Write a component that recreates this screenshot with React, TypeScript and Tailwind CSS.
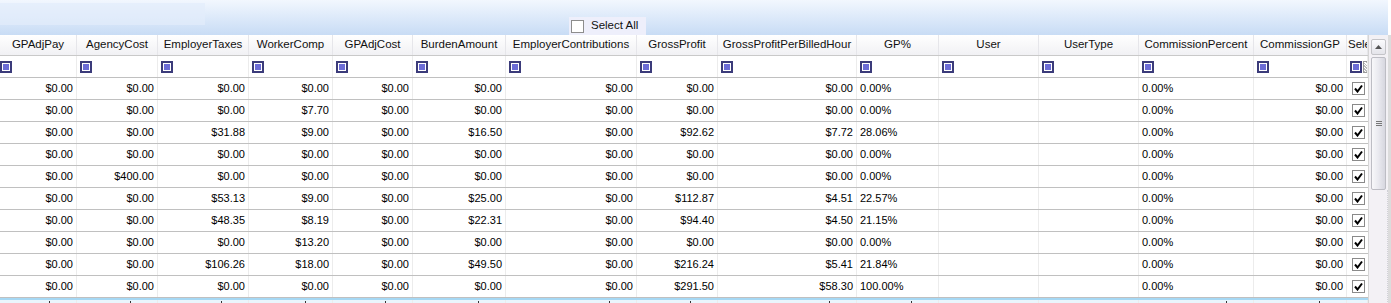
import React from "react";

const cols = [
  { name: "GPAdjPay", w: 77 },
  { name: "AgencyCost", w: 81 },
  { name: "EmployerTaxes", w: 91 },
  { name: "WorkerComp", w: 84 },
  { name: "GPAdjCost", w: 80 },
  { name: "BurdenAmount", w: 93 },
  { name: "EmployerContributions", w: 131 },
  { name: "GrossProfit", w: 81 },
  { name: "GrossProfitPerBilledHour", w: 139 },
  { name: "GP%", w: 82 },
  { name: "User", w: 100 },
  { name: "UserType", w: 100 },
  { name: "CommissionPercent", w: 115 },
  { name: "CommissionGP", w: 93 },
  { name: "Sele", w: 21 },
];

const gridCols =
  "grid grid-cols-[77px_81px_91px_84px_80px_93px_131px_81px_139px_82px_100px_100px_115px_93px_21px]";

// money columns then GP%
const rows: string[][] = [
  ["0.00", "0.00", "0.00", "0.00", "0.00", "0.00", "0.00", "0.00", "0.00", "0.00"],
  ["0.00", "0.00", "0.00", "7.70", "0.00", "0.00", "0.00", "0.00", "0.00", "0.00"],
  ["0.00", "0.00", "31.88", "9.00", "0.00", "16.50", "0.00", "92.62", "7.72", "28.06"],
  ["0.00", "0.00", "0.00", "0.00", "0.00", "0.00", "0.00", "0.00", "0.00", "0.00"],
  ["0.00", "400.00", "0.00", "0.00", "0.00", "0.00", "0.00", "0.00", "0.00", "0.00"],
  ["0.00", "0.00", "53.13", "9.00", "0.00", "25.00", "0.00", "112.87", "4.51", "22.57"],
  ["0.00", "0.00", "48.35", "8.19", "0.00", "22.31", "0.00", "94.40", "4.50", "21.15"],
  ["0.00", "0.00", "0.00", "13.20", "0.00", "0.00", "0.00", "0.00", "0.00", "0.00"],
  ["0.00", "0.00", "106.26", "18.00", "0.00", "49.50", "0.00", "216.24", "5.41", "21.84"],
  ["0.00", "0.00", "0.00", "0.00", "0.00", "0.00", "0.00", "291.50", "58.30", "100.00"],
];

function FilterIcon() {
  return (
    <div className="h-[12px] w-[12px] border-2 border-[#3b3b7a] bg-white p-px">
      <div className="h-full w-full bg-[#6c6cd6]" />
    </div>
  );
}

function CheckBox({ checked }: { checked: boolean }) {
  return (
    <div className="flex h-[13px] w-[13px] items-center justify-center border border-[#8a8a8a] bg-white">
      {checked ? (
        <svg width="9" height="9" viewBox="0 0 9 9">
          <path d="M1 4.5 L3.5 7.5 L8 1.5" stroke="#000" strokeWidth="2" fill="none" />
        </svg>
      ) : null}
    </div>
  );
}

function Scrollbar() {
  return (
    <div className="flex w-[20px] flex-col border-l border-[#d6d6d6] bg-[#f3f1f5] pt-[4px]">
      <div className="mx-auto flex h-[16px] w-[15px] items-center justify-center rounded-[2px] border border-[#c4c4c8] bg-gradient-to-b from-[#fbfbfd] to-[#e4e4ea]">
        <svg width="7" height="4" viewBox="0 0 7 4">
          <path d="M0 4 L3.5 0 L7 4 Z" fill="#555" />
        </svg>
      </div>
      <div className="mx-auto mt-[2px] flex h-[133px] w-[15px] items-center justify-center rounded-[2px] border border-[#bdbdc4] bg-gradient-to-r from-[#f8f8fa] via-[#e9e9ef] to-[#d7d7df]">
        <div className="flex flex-col gap-px">
          <div className="h-px w-[6px] bg-[#777]" />
          <div className="h-px w-[6px] bg-[#777]" />
          <div className="h-px w-[6px] bg-[#777]" />
        </div>
      </div>
      <div className="flex-1 border-r border-dotted border-[#d0d0d6]" />
    </div>
  );
}

export default function App() {
  return (
    <div
      className="relative h-[303px] w-[1391px] overflow-hidden bg-white text-[11px] text-black"
      style={{ fontFamily: '"Liberation Sans", Arial, sans-serif' }}
    >
      {/* top band */}
      <div className="flex h-[35px] w-[1388px] bg-gradient-to-b from-[#f2f7fe] to-[#c8dcf5]">
        <div className="mt-[3px] h-[22px] w-[205px] bg-[#e2edfb]/70" />
        <div className="ml-[364px] mt-[17px] flex h-[18px] w-[77px] items-center gap-[7px] bg-[#eeeffb] pl-[2px]">
          <div className="h-[13px] w-[13px] border border-[#8d8d8d] bg-white" />
          <span className="text-[11.5px] text-[#111]">Select All</span>
        </div>
      </div>

      <div className="flex">
        <div className="w-[1368px]">
          {/* header */}
          <div className={`${gridCols} h-[21px] border-b border-[#c9c9c9] bg-gradient-to-b from-white to-[#f1f1f4]`}>
            {cols.map((c, i) => (
              <div
                key={c.name}
                className={`flex items-center overflow-hidden whitespace-nowrap border-r border-[#e6e6ea] text-[11.5px] text-[#111] ${
                  i === 14 ? "justify-start pl-px" : "justify-center"
                }`}
              >
                {c.name}
              </div>
            ))}
          </div>
          {/* filter row */}
          <div className={`${gridCols} h-[22px] border-b border-[#c0c0c0]`}>
            {cols.map((c, i) => (
              <div key={c.name} className="flex items-center gap-[1px] overflow-hidden border-r border-[#ececec] pl-[1px]">
                {i === 0 ? <div className="ml-[-1px]"><FilterIcon /></div> : <div className="ml-[2px]"><FilterIcon /></div>}
                {i === 14 ? (
                  <div className="h-[12px] w-[8px] shrink-0 border border-[#999] bg-[repeating-linear-gradient(45deg,#bbb_0,#bbb_1px,#fff_1px,#fff_2px)]" />
                ) : null}
              </div>
            ))}
          </div>
          {/* data rows */}
          {rows.map((r, ri) => (
            <div key={ri} className={`${gridCols} h-[22px] border-b border-[#c0c0c0]`}>
              {r.slice(0, 9).map((v, ci) => (
                <div key={ci} className="flex items-center justify-end border-r border-[#ececec] pr-[3px]">
                  ${v}
                </div>
              ))}
              <div className="flex items-center border-r border-[#ececec] pl-[3px]">{r[9]}%</div>
              <div className="border-r border-[#ececec]" />
              <div className="border-r border-[#ececec]" />
              <div className="flex items-center border-r border-[#ececec] pl-[3px]">0.00%</div>
              <div className="flex items-center justify-end border-r border-[#ececec] pr-[3px]">$0.00</div>
              <div className="flex items-center pl-[5px]">
                <CheckBox checked />
              </div>
            </div>
          ))}
          {/* partial row */}
          <div className={`${gridCols} h-[8px] border-t-2 border-[#a6d8f4] bg-[#eaf5fc]`}>
            {cols.map((c, i) => (
              <div key={c.name} className="relative border-r border-[#ececec]">
                {i < 14 && i !== 10 && i !== 11 ? (
                  <div className="absolute right-[26px] top-[1px] h-[3px] w-px bg-[#333]" />
                ) : null}
              </div>
            ))}
          </div>
        </div>
        <Scrollbar />
        <div className="w-[3px] bg-[#dcdcdc]" />
      </div>
    </div>
  );
}
